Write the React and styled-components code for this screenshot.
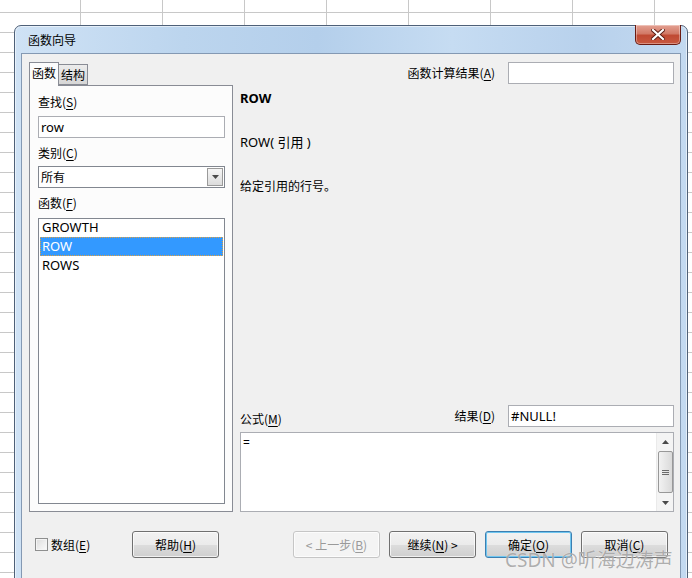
import React from 'react';
import styled, { createGlobalStyle } from 'styled-components';

const Global = createGlobalStyle`
  html, body { margin: 0; padding: 0; }
  body {
    width: 692px; height: 578px; overflow: hidden;
    font-family: "Noto Sans", "Noto Sans CJK SC", sans-serif;
    font-size: 12px; color: #000;
  }
  * { box-sizing: border-box; }
`;

const Desktop = styled.div`
  position: relative;
  width: 692px;
  height: 578px;
  overflow: hidden;
  padding: 25px 0 0 14px;
  background-color: #fff;
  background-image:
    repeating-linear-gradient(to right, transparent 0, transparent 80px, #c8c8c8 80px, #c8c8c8 81px, transparent 81px, transparent 82px),
    repeating-linear-gradient(to bottom, transparent 0, transparent 12px, #c8c8c8 12px, #c8c8c8 13px, transparent 13px, transparent 20px);
`;

const Dialog = styled.div`
  width: 674px;
  height: 562px;
  display: flex;
  flex-direction: column;
  border: 1px solid #4e6078;
  border-radius: 7px 7px 0 0;
  padding: 0 6px 6px 6px;
  background: linear-gradient(to right, #cfe2f5 0%, #bcd5ee 25%, #b4cfeb 45%, #c6dcf2 65%, #b8d1ec 85%, #c3d9f0 100%);
  box-shadow: inset 0 0 0 1px rgba(255,255,255,0.55);
`;

const TitleBar = styled.div`
  height: 27px;
  display: flex;
  align-items: flex-start;
  justify-content: space-between;
`;

const Title = styled.div`
  padding: 6px 0 0 7px;
  font-family: "Noto Sans CJK SC", sans-serif;
  font-size: 12px;
  line-height: 16px;
  color: #000;
`;

const CloseButton = styled.div`
  width: 46px;
  height: 20px;
  margin-top: -1px;
  border: 1px solid #6b1b12;
  border-top: none;
  border-radius: 0 0 5px 5px;
  background: linear-gradient(to bottom, #e4a193 0%, #d27a67 45%, #c04a33 55%, #c8583f 100%);
  box-shadow: inset 0 0 0 1px rgba(255,255,255,0.35);
  display: flex;
  align-items: center;
  justify-content: center;
`;

const Content = styled.div`
  flex: 1;
  background: #f0f0f0;
  border: 1px solid #8499b3;
  display: grid;
  grid-template-columns: 204px 434px;
  grid-template-rows: 450px auto;
  align-content: start;
  column-gap: 7px;
  padding: 8px 6px 0 7px;
`;

const LeftCol = styled.div`
  display: flex;
  flex-direction: column;
`;

const Tabs = styled.div`
  display: flex;
  align-items: flex-end;
  height: 23px;
`;

const Tab = styled.div`
  height: ${p => (p.$active ? '24px' : '21px')};
  margin-bottom: ${p => (p.$active ? '-1px' : '0')};
  padding: 0 2px;
  border: 1px solid #898c95;
  border-bottom: ${p => (p.$active ? 'none' : '1px solid #898c95')};
  border-left: ${p => (p.$active ? '1px solid #898c95' : 'none')};
  background: ${p => (p.$active ? '#fcfcfc' : 'linear-gradient(to bottom, #ececec, #d6d6d6)')};
  font-family: "Noto Sans CJK SC", sans-serif;
  font-size: 12px;
  line-height: ${p => (p.$active ? '20px' : '19px')};
  position: relative;
  z-index: ${p => (p.$active ? 1 : 0)};
`;

const Panel = styled.div`
  flex: 1;
  border: 1px solid #898c95;
  background: #fcfcfc;
  display: flex;
  flex-direction: column;
  padding: 0 7px 7px 8px;
`;

const Label = styled.div`
  font-family: "Noto Sans CJK SC", sans-serif;
  font-size: 12px;
  line-height: 16px;
  margin-top: ${p => p.$mt || 0}px;
  white-space: nowrap;
  u { text-decoration: underline; text-underline-offset: 2px; }
`;

const TextBox = styled.div`
  height: 22px;
  margin-top: ${p => p.$mt || 0}px;
  width: ${p => p.$w || 'auto'};
  border: 1px solid #abadb3;
  background: #fff;
  font-size: 13px;
  line-height: 20px;
  padding-left: 2px;
  color: #000;
`;

const Select = styled.div`
  height: 22px;
  margin-top: ${p => p.$mt || 0}px;
  border: 1px solid #828790;
  background: #fff;
  display: flex;
  align-items: stretch;
  justify-content: space-between;
  padding: 1px;
`;

const SelectValue = styled.div`
  font-family: "Noto Sans CJK SC", sans-serif;
  font-size: 12px;
  line-height: 18px;
  padding-left: 1px;
`;

const DropButton = styled.div`
  width: 16px;
  border: 1px solid #9a9a9a;
  background: linear-gradient(to bottom, #f6f6f6, #dcdcdc);
  display: flex;
  align-items: center;
  justify-content: center;
`;

const List = styled.div`
  flex: 1;
  margin-top: ${p => p.$mt || 0}px;
  border: 1px solid #828790;
  background: #fff;
  padding: 0 1px;
`;

const ListItem = styled.div`
  height: 19px;
  font-size: 13px;
  line-height: 17px;
  padding-left: 1px;
  color: ${p => (p.$selected ? '#fff' : '#000')};
  background: ${p => (p.$selected ? '#3399ff' : 'transparent')};
  border: 1px dotted ${p => (p.$selected ? '#e0a040' : 'transparent')};
  &:first-child { margin-top: -1px; }
`;

const RightCol = styled.div`
  display: flex;
  flex-direction: column;
`;

const FieldRow = styled.div`
  display: flex;
  align-items: center;
  justify-content: flex-end;
  gap: 13px;
  height: 22px;
`;

const FieldLabel = styled(Label)`
  line-height: 22px;
`;

const Info = styled.div`
  flex: 1;
  padding-top: 6px;
`;

const FuncName = styled.div`
  font-weight: 700;
  font-size: 13px;
  line-height: 17px;
`;

const InfoText = styled.div`
  line-height: 17px;
  margin-top: ${p => p.$mt}px;
  font-family: ${p => p.$cjk ? '"Noto Sans CJK SC", sans-serif' : 'inherit'};
  font-size: ${p => p.$cjk ? '12px' : '13px'};
`;

const FormulaHead = styled.div`
  display: flex;
  align-items: flex-end;
  justify-content: space-between;
  height: 22px;
  margin-top: 1px;
`;

const ResultGroup = styled.div`
  display: flex;
  align-items: center;
  gap: 13px;
`;

const FormulaBox = styled.div`
  margin-top: 5px;
  height: 80px;
  border: 1px solid #abadb3;
  background: #fff;
  display: flex;
  justify-content: space-between;
`;

const FormulaText = styled.div`
  font-size: 12px;
  line-height: 16px;
  padding: 2px 0 0 2px;
`;

const ScrollBar = styled.div`
  width: 17px;
  background: #f4f4f4;
  border-left: 1px solid #eaeaea;
  display: flex;
  flex-direction: column;
  align-items: center;
`;

const ScrollArrow = styled.div`
  height: 17px;
  width: 17px;
  display: flex;
  align-items: center;
  justify-content: center;
`;

const Thumb = styled.div`
  width: 15px;
  height: 42px;
  margin-top: 1px;
  border: 1px solid #989898;
  border-radius: 2px;
  background: linear-gradient(to right, #f2f2f2, #dadada);
  display: flex;
  align-items: center;
  justify-content: center;
`;

const ScrollTrack = styled.div`
  flex: 1;
`;

const BottomBar = styled.div`
  grid-column: 1 / -1;
  display: flex;
  align-items: center;
  margin-top: 19px;
  height: 27px;
  padding-right: 6px;
`;

const CheckWrap = styled.label`
  width: 103px;
  display: flex;
  align-items: center;
  gap: 3px;
  padding-left: 6px;
  font-family: "Noto Sans CJK SC", sans-serif;
  font-size: 12px;
  u { text-decoration: underline; text-underline-offset: 2px; }
`;

const CheckBox = styled.span`
  width: 13px;
  height: 13px;
  border: 1px solid #8e8f8f;
  background: linear-gradient(135deg, #dcdcdc, #fbfbfb);
  box-shadow: inset 0 0 0 1px #f4f4f4;
`;

const Button = styled.div`
  width: 87px;
  height: 27px;
  border: 1px solid ${p => p.$default ? '#3c7fb1' : p.$disabled ? '#c6c6c6' : '#707070'};
  border-radius: 3px;
  background: ${p => p.$disabled ? '#f4f4f4' : 'linear-gradient(to bottom, #f2f2f2 0%, #ebebeb 50%, #dddddd 51%, #cfcfcf 100%)'};
  box-shadow: ${p => p.$default ? 'inset 0 0 0 1px #6fc6f0' : 'inset 0 0 0 1px rgba(255,255,255,0.7)'};
  color: ${p => p.$disabled ? '#9a9a9a' : '#000'};
  font-family: "Noto Sans CJK SC", sans-serif;
  font-size: 12px;
  display: flex;
  align-items: center;
  justify-content: center;
  white-space: pre;
  u { text-decoration: underline; text-underline-offset: 2px; }
`;

const Spacer = styled.div`
  flex: 1;
`;

const NavGroup = styled.div`
  display: flex;
  gap: 9px;
`;

const Watermark = styled.div`
  position: absolute;
  left: 505px;
  top: 548px;
  font-family: "Noto Sans", "Noto Sans CJK SC", sans-serif;
  font-size: 19px;
  line-height: 24px;
  color: rgba(140, 140, 140, 0.7);
  text-shadow: 0 0 1px rgba(255,255,255,0.8);
  white-space: nowrap;
  pointer-events: none;
`;

const Triangle = ({ up }) => (
  <svg width="7" height="4" viewBox="0 0 7 4">
    <path d={up ? 'M0 4 L3.5 0 L7 4 Z' : 'M0 0 L7 0 L3.5 4 Z'} fill="#4a4a4a" />
  </svg>
);

export default function App() {
  return (
    <>
      <Global />
      <Desktop>
        <Dialog>
          <TitleBar>
            <Title>函数向导</Title>
            <CloseButton>
              <svg width="14" height="11" viewBox="0 0 14 11">
                <path d="M2 1 L12 10 M12 1 L2 10" stroke="#5a1b12" strokeWidth="4" strokeLinecap="square" />
                <path d="M2 1 L12 10 M12 1 L2 10" stroke="#fff" strokeWidth="2.2" strokeLinecap="square" />
              </svg>
            </CloseButton>
          </TitleBar>
          <Content>
            <LeftCol>
              <Tabs>
                <Tab $active>函数</Tab>
                <Tab>结构</Tab>
              </Tabs>
              <Panel>
                <Label $mt={8}>查找(<u>S</u>)</Label>
                <TextBox $mt={6}>row</TextBox>
                <Label $mt={7}>类别(<u>C</u>)</Label>
                <Select $mt={5}>
                  <SelectValue>所有</SelectValue>
                  <DropButton><Triangle /></DropButton>
                </Select>
                <Label $mt={7}>函数(<u>F</u>)</Label>
                <List $mt={7}>
                  <ListItem>GROWTH</ListItem>
                  <ListItem $selected>ROW</ListItem>
                  <ListItem>ROWS</ListItem>
                </List>
              </Panel>
            </LeftCol>
            <RightCol>
              <FieldRow>
                <FieldLabel>函数计算结果(<u>A</u>)</FieldLabel>
                <TextBox $w="166px" />
              </FieldRow>
              <Info>
                <FuncName>ROW</FuncName>
                <InfoText $mt={27}>ROW( 引用 )</InfoText>
                <InfoText $mt={26} $cjk>给定引用的行号。</InfoText>
              </Info>
              <FormulaHead>
                <Label>公式(<u>M</u>)</Label>
                <ResultGroup>
                  <FieldLabel>结果(<u>D</u>)</FieldLabel>
                  <TextBox $w="166px">#NULL!</TextBox>
                </ResultGroup>
              </FormulaHead>
              <FormulaBox>
                <FormulaText>=</FormulaText>
                <ScrollBar>
                  <ScrollArrow><Triangle up /></ScrollArrow>
                  <Thumb>
                    <svg width="7" height="7" viewBox="0 0 7 7">
                      <path d="M0 1.5 H7 M0 3.5 H7 M0 5.5 H7" stroke="#6a6a6a" strokeWidth="1" />
                    </svg>
                  </Thumb>
                  <ScrollTrack />
                  <ScrollArrow><Triangle /></ScrollArrow>
                </ScrollBar>
              </FormulaBox>
            </RightCol>
            <BottomBar>
              <CheckWrap><CheckBox /><span>数组(<u>E</u>)</span></CheckWrap>
              <Button>帮助(<u>H</u>)</Button>
              <Spacer />
              <NavGroup>
                <Button $disabled>{'< 上一步('}<u>B</u>)</Button>
                <Button>继续(<u>N</u>){') >'.slice(1)}</Button>
                <Button $default>确定(<u>O</u>)</Button>
                <Button>取消(<u>C</u>)</Button>
              </NavGroup>
            </BottomBar>
          </Content>
        </Dialog>
        <Watermark>CSDN @听海边涛声</Watermark>
      </Desktop>
    </>
  );
}
